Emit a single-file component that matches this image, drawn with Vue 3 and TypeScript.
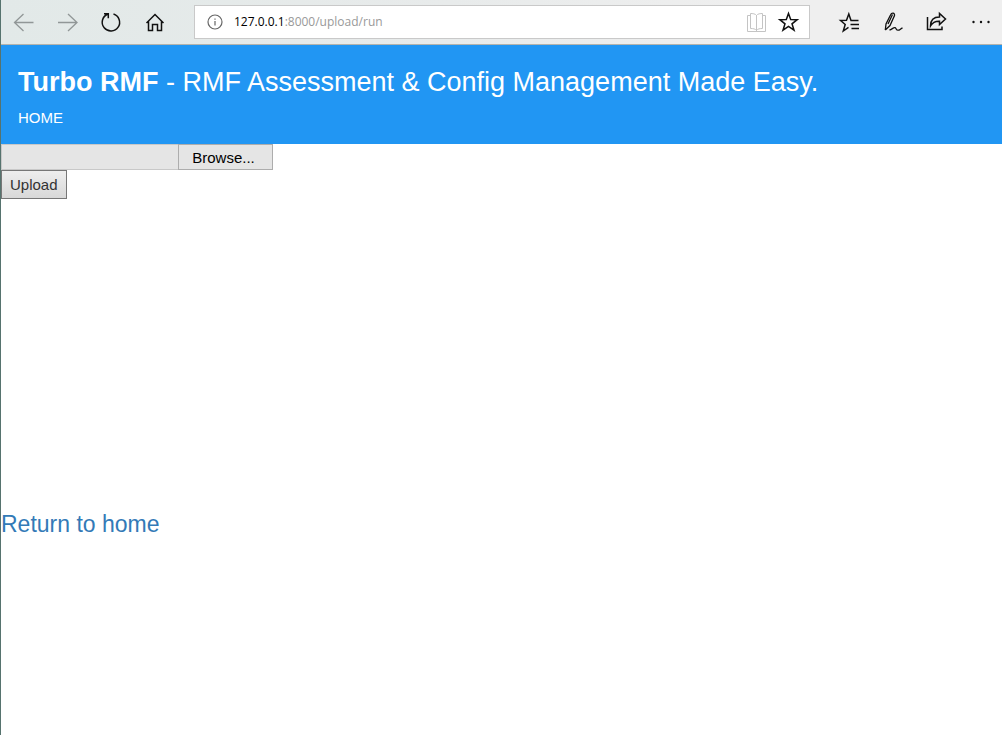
<script setup lang="ts">
import { ref } from 'vue'

const fileName = ref('')
const host = '127.0.0.1'
const path = ':8000/upload/run'
</script>

<template>
  <div class="window">
    <div class="toolbar">
      <button class="tool muted" type="button" aria-label="Back">
        <svg viewBox="0 0 44 44"><path d="M32.5 22.5H13.5M22.5 14L13.5 22.5L22.5 31" /></svg>
      </button>
      <button class="tool muted" type="button" aria-label="Forward">
        <svg viewBox="0 0 44 44"><path d="M13 22.5H32M23 14L32 22.5L23 31" /></svg>
      </button>
      <button class="tool bold" type="button" aria-label="Refresh">
        <svg viewBox="0 0 44 44">
          <path d="M24.5 14A8.7 8.7 0 1 1 18.5 14.3M15 13.7H19.3V18.2" />
        </svg>
      </button>
      <button class="tool bold" type="button" aria-label="Home">
        <svg viewBox="0 0 44 44">
          <path d="M13.5 23L22 14.5L30.5 23M15.5 21.5V30.5H19.5V24.5H24.5V30.5H28.5V21.5" />
        </svg>
      </button>

      <div class="address">
        <svg class="info" viewBox="0 0 16 16" aria-hidden="true">
          <circle cx="8" cy="8" r="7" />
          <path d="M8 7V11.5M8 4.5V5.7" />
        </svg>
        <span class="url">{{ host }}<span class="path">{{ path }}</span></span>
        <button class="mini" type="button" aria-label="Reading view">
          <svg class="book" viewBox="0 0 32 32">
            <path d="M15.5 9V25.5M15.5 9.5C14.5 7.7 11.5 7.5 9.5 7.500V22.5C12 22.500 14.500 22.800 15.5 24.500M15.5 9.5C16.500 7.700 19.500 7.500 21.500 7.500V22.500C19 22.500 16.500 22.800 15.500 24.500M9.500 9.500H6.500V25.500H24.500V9.500H21.500" />
          </svg>
        </button>
        <button class="mini" type="button" aria-label="Add to favorites">
          <svg class="star" viewBox="0 0 32 32">
            <path d="M15.5 7.5L17.7 13.5L24.2 13.7L19 17.8L21 24.2L15.5 20.5L10 24.2L12 17.8L6.8 13.7L13.300 13.500Z" />
          </svg>
        </button>
      </div>

      <button class="tool bold" type="button" aria-label="Favorites">
        <svg viewBox="0 0 44 44">
          <path d="M32.5 20.5H25L22.8 14L20.5 20.2L14.5 20.5L19.2 24.5L17.3 31L22.5 27.3M24.5 24.5H33M25.5 28.5H33" />
        </svg>
      </button>
      <button class="tool" type="button" aria-label="Add notes">
        <svg viewBox="0 0 44 44">
          <path d="M15.3 30L16 24L20.5 15C21.500 12.500 25 12.500 24.500 15.500L20 25.500L15.300 30M18 24L22.500 14.500" />
          <path d="M19.5 30C22 29.500 23.500 27 25.200 27.700C26.500 28.500 26 30.200 28 30.200C30 30.200 30.500 28.500 32.500 28" />
        </svg>
      </button>
      <button class="tool bold" type="button" aria-label="Share">
        <svg viewBox="0 0 44 44">
          <path d="M13.5 17V29.500H28V26.500" />
          <path d="M16.5 26C16.500 20.500 19.500 17 25.500 17V13.500L31.500 19L25.500 24.500V21.200C21 21 18.500 22.500 16.500 26Z" />
        </svg>
      </button>
      <button class="tool" type="button" aria-label="More">
        <svg class="dots" viewBox="0 0 44 44">
          <circle cx="15.5" cy="22" r="1.2" />
          <circle cx="23" cy="22" r="1.2" />
          <circle cx="30.5" cy="22" r="1.2" />
        </svg>
      </button>
    </div>

    <header class="banner">
      <h1><b>Turbo RMF</b> - RMF Assessment &amp; Config Management Made Easy.</h1>
      <nav><a href="#home">HOME</a></nav>
    </header>

    <main>
      <form @submit.prevent>
        <div class="picker">
          <input v-model="fileName" type="text" readonly aria-label="Selected file" />
          <button type="button">Browse...</button>
        </div>
        <button class="upload" type="submit">Upload</button>
      </form>
      <a class="return" href="#home">Return to home</a>
    </main>
  </div>
</template>

<style>
body {
  margin: 0;
}
</style>

<style scoped>
.window {
  box-sizing: border-box;
  min-height: 100vh;
  border-left: 1px solid #56736e;
  background: #fff;
  font-family: "Liberation Sans", Arial, sans-serif;
}

button {
  font-family: inherit;
  border-radius: 0;
}

.toolbar {
  display: flex;
  align-items: center;
  height: 44px;
  border-bottom: 1px solid #b3b3ad;
  background: linear-gradient(90deg, #e2e9e8, #e8ebeb 45%, #efefef 75%);
}

.tool,
.mini {
  flex: none;
  padding: 0;
  border: 0;
  background: none;
}

.tool {
  width: 44px;
  height: 44px;
}

.mini {
  width: 32px;
  height: 32px;
}

svg {
  display: block;
  width: 100%;
  height: 100%;
  fill: none;
  stroke: #111;
  stroke-width: 1.3;
}

.bold svg,
.mini .star {
  stroke-width: 1.5;
}

.muted svg {
  stroke: #919797;
}

.address {
  display: flex;
  flex: 1;
  align-items: center;
  box-sizing: border-box;
  min-width: 0;
  height: 34px;
  margin: 0 16px 0 17px;
  padding: 0 4px 0 12px;
  border: 1px solid #c9c9c9;
  background: #fff;
}

.address .info {
  flex: none;
  width: 16px;
  height: 16px;
  stroke: #666;
  stroke-width: 1.2;
}

.address .book {
  stroke: #c4c4c4;
  stroke-width: 1;
}

.url {
  flex: 1;
  margin-left: 11px;
  color: #000;
  font-family: "Open Sans", sans-serif;
  font-size: 12px;
  line-height: 16px;
}

.path {
  color: #999;
}

.toolbar .dots {
  fill: #111;
  stroke: none;
}

.banner {
  padding: 20px 17px 16px;
  background: #2196f3;
  color: #fff;
}

h1 {
  margin: 0;
  font-size: 27px;
  font-weight: 400;
  line-height: 34px;
}

nav {
  margin-top: 8px;
  font-size: 15px;
  line-height: 21px;
}

nav a {
  color: #fff;
  text-decoration: none;
}

.picker {
  display: flex;
  height: 26px;
}

.picker input,
.picker button {
  box-sizing: border-box;
  background: #e5e5e5;
  font-size: 15px;
}

.picker input {
  width: 177px;
  border: 1px solid #c8c8c8;
  border-right: 0;
}

.picker button {
  width: 95px;
  padding: 0 4px 0 0;
  border: 1px solid #adadad;
  color: #000;
}

.upload {
  display: block;
  height: 29px;
  padding: 0 8px;
  border: 1px solid #777;
  background: linear-gradient(#eee, #d8d8d8);
  color: #333;
  font-size: 15px;
}

.return {
  display: inline-block;
  margin-top: 312px;
  color: #337ab7;
  font-size: 23px;
  line-height: 26px;
  text-decoration: none;
}
</style>
